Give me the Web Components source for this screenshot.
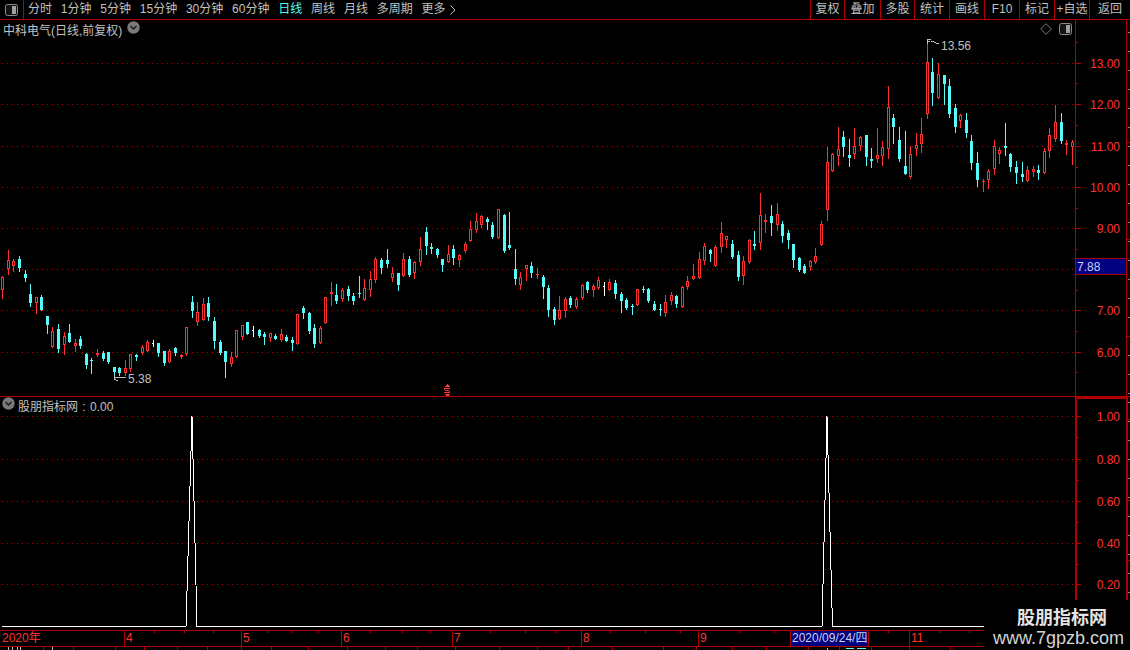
<!DOCTYPE html>
<html>
<head>
<meta charset="utf-8">
<style>
    html, body { margin: 0; padding: 0; background: #000; overflow: hidden; }
    body { width: 1130px; height: 650px; font: 12px "Liberation Sans", "Noto Sans CJK SC", sans-serif; color: #c0c0c0; }
</style>
</head>
<body>
<stock-terminal>
    <tool-bar slot="top">
        <tool-item>分时</tool-item>
        <tool-item>1分钟</tool-item>
        <tool-item>5分钟</tool-item>
        <tool-item>15分钟</tool-item>
        <tool-item>30分钟</tool-item>
        <tool-item>60分钟</tool-item>
        <tool-item active>日线</tool-item>
        <tool-item>周线</tool-item>
        <tool-item>月线</tool-item>
        <tool-item>多周期</tool-item>
        <tool-item more>更多</tool-item>
        <tool-button slot="right" style="width:33px">复权</tool-button>
        <tool-button slot="right" style="width:35px">叠加</tool-button>
        <tool-button slot="right" style="width:33px">多股</tool-button>
        <tool-button slot="right" style="width:34px">统计</tool-button>
        <tool-button slot="right" style="width:34px">画线</tool-button>
        <tool-button slot="right" style="width:34px">F10</tool-button>
        <tool-button slot="right" style="width:34px">标记</tool-button>
        <tool-button slot="right" style="width:34px">+自选</tool-button>
        <tool-button slot="right" style="width:40px">返回</tool-button>
    </tool-bar>
    <main-pane slot="main">
        <pane-title tools>中科电气(日线,前复权)</pane-title>
    </main-pane>
    <sub-pane slot="sub">
        <pane-title indent>股朋指标网 : 0.00</pane-title>
    </sub-pane>
    <time-axis slot="time">
        <time-cell width="124">2020年</time-cell>
        <time-cell width="117" ticks="29,59,88">4</time-cell>
        <time-cell width="100" ticks="25,50,76">5</time-cell>
        <time-cell width="111" ticks="28,60,88">6</time-cell>
        <time-cell width="129" ticks="37,72,103">7</time-cell>
        <time-cell width="117" ticks="28,63,98">8</time-cell>
        <time-cell width="92" ticks="41,75">9</time-cell>
        <time-cell width="78" selected>2020/09/24/四</time-cell>
        <time-cell width="41" ticks="19">&nbsp;</time-cell>
        <time-cell width="221" ticks="29,59">11</time-cell>
    </time-axis>
    <bottom-tabs slot="tabs"></bottom-tabs>
    <water-mark slot="mark">
        <span slot="name">股朋指标网</span>
        <span slot="site">www.7gpzb.com</span>
    </water-mark>
</stock-terminal>

<script>
// shared colours of the terminal
const LINE = '#b00000';
const RED = '#ff3232';
const CYAN = '#54fcfc';
const GRID = '#c00000';

function fragment(html) {
    return document.createRange().createContextualFragment(html);
}

// candles read off the chart: colour, x, high, body top, body bottom, low (3x coords in each block)
const CANDLES = [
    { ox: 0, oy: 240, rows: 'r 7 108 112 150 173,r 25 30 60 87 102,r 40 58 64 78 93,c 58 48 57 84 93,c 76 90 102 114 123,c 91 132 162 189 198,r 109 171 171 189 219,c 124 165 171 210 210,c 142 228 228 255 279,r 157 261 273 321 321,c 175 252 267 327 336,r 193 276 288 315 342,c 208 252 279 306 306,r 226 297 309 318 333,c 241 288 297 318 324,c 259 339 342 375 384,c 274 354 360 362 399,r 292 327 339 345 348,c 310 333 339 357 360,c 325 336 336 366 369,c 343 381 381 396 414,c 358 381 384 399 405,r 376 360 384 399 405,r 391 342 342 387 393,c 409 342 345 351 360,r 427 315 321 339 342,r 442 300 306 333 333,w 460 300 310 312 318,c 475 309 309 339 348,c 493 333 333 369 375,r 508 327 333 366 366,c 526 321 324 339 345,r 544 342 345 351 354,r 559 261 261 342 345,c 577 168 186 213 231,r 592 186 216 246 255,r 610 174 192 240 240,c 625 171 189 231 240,c 643 231 243 303 324,c 661 300 306 339 342,c 676 333 333 366 411,r 694 336 351 372 378,r 709 270 270 351 351,r 727 255 255 291 297,c 742 246 246 282 282,w 760 258 270 272 288,c 777 267 270 288 291' },
    { ox: 260, oy: 200, rows: 'c 13 396 402 411 432,r 31 399 399 414 423,c 46 402 408 417 417,r 64 387 402 420 423,c 79 405 411 423 423,c 97 411 420 429 450,r 112 342 342 432 432,c 130 318 324 339 354,c 148 336 339 393 399,c 163 372 384 432 441,r 181 378 384 429 429,r 196 291 291 369 369,r 214 246 276 282 315,c 229 252 285 303 309,r 247 264 270 297 303,c 265 258 267 288 300,c 280 279 288 303 312,c 298 228 279 282 291,r 313 237 264 300 300,r 331 213 237 270 288,r 346 171 177 240 246,c 364 174 180 204 219,c 382 147 180 192 201,r 397 201 219 234 243,c 415 219 219 255 270,r 430 159 177 228 228,c 448 168 177 225 228,r 463 183 186 219 234,r 481 111 147 186 195,c 499 81 96 138 162,c 514 129 141 147 159,c 532 144 147 165 171,c 547 177 177 195 213,r 565 135 162 186 186,c 580 135 147 174 192,r 598 162 165 180 198,r 616 126 132 153 156,r 631 63 87 123 123,r 649 39 63 90 96,r 664 45 48 75 81,c 682 51 57 66 87,c 697 66 75 111 114,r 715 27 27 114 114,c 733 42 45 153 156,c 748 36 135 144 147,c 766 147 207 237 252' },
    { ox: 510, oy: 200, rows: 'r 31 216 231 255 267,r 49 195 195 207 240,c 64 186 198 219 231,r 82 204 222 224 234,c 100 225 231 261 294,c 115 255 264 330 348,c 133 321 327 360 372,r 148 288 330 357 357,r 166 291 297 333 351,c 181 288 294 315 321,r 199 291 297 321 324,r 217 252 255 294 297,c 232 243 246 270 276,r 250 252 258 270 288,r 265 231 240 264 267,w 283 246 258 260 285,r 298 237 246 270 270,c 316 240 249 282 294,c 334 276 282 303 336,c 349 294 300 324 327,c 367 312 318 321 342,r 382 267 267 315 315,c 400 258 267 270 276,c 415 264 267 303 306,c 433 303 312 330 330,c 451 312 327 330 345,r 466 285 306 339 348,r 484 276 285 303 312,c 499 285 288 312 321,r 517 258 261 321 321,r 532 228 243 261 267,r 550 192 228 237 237,r 568 156 177 234 234,r 583 129 138 183 192,c 601 147 150 162 183,r 616 135 141 198 198,r 634 66 99 141 156,r 649 108 108 120 141,c 667 120 132 171 174,c 685 153 165 231 240,r 700 168 183 228 252,r 718 117 120 186 189,c 733 93 132 138 147,r 751 -21 45 129 147,r 766 42 60 66 96,c 784 15 48 69 105,r 802 9 42 75 90,c 817 63 72 108 126,c 835 90 99 120 144,c 850 132 132 180 201,c 868 171 174 210 213,c 883 192 198 219 219' },
    { ox: 800, oy: 40, rows: 'r 31 660 663 681 690,r 46 624 648 666 669,r 64 543 552 615 615,r 82 321 366 510 540,r 97 339 342 393 393,r 115 261 327 348 375,c 130 273 291 321 348,c 148 297 345 354 378,r 163 264 318 342 354,r 181 288 291 318 330,c 199 285 285 351 375,c 214 324 357 363 381,r 232 264 345 357 366,r 247 303 321 348 375,r 265 138 201 327 354,c 280 222 234 261 309,c 298 261 300 357 363,c 316 273 378 402 402,r 331 318 342 411 414,r 349 279 315 327 345,r 364 234 282 312 336,r 382 12 66 222 234,c 397 54 96 159 195,r 415 69 102 174 174,c 433 105 105 132 192,c 448 117 138 222 231,c 466 192 204 261 276,r 481 222 225 243 261,c 499 219 240 279 291,c 514 285 303 369 387,c 532 336 369 420 438,r 550 417 423 425 453,r 565 387 393 420 444,r 583 300 318 387 402,r 598 321 330 342 369,c 616 249 318 324 345,c 631 339 342 381 393,c 649 363 381 399 429,c 667 366 402 411 423,r 682 378 390 423 423,r 700 378 387 396 408,c 715 375 390 399 417,r 733 324 333 399 399,r 748 264 285 333 351,r 766 195 246 297 303,c 784 219 246 303 309,r 799 300 309 315 342,r 817 300 306 321 372' }
];

function candleSvg() {
    let out = '';
    const colours = { r: RED, c: CYAN, w: '#ffffff' };
    CANDLES.forEach(function(block) {
        block.rows.split(',').forEach(function(row) {
            const p = row.split(' ');
            const x = Math.floor(block.ox + p[1] / 3);
            const y = p.slice(2).map(function(v) { return Math.round(block.oy + v / 3); });
            const col = colours[p[0]];
            const h = y[2] - y[1];
            // wick: above and below the body only, red bodies are hollow
            out += `<rect x="${x}" y="${y[0]}" width="1" height="${Math.max(y[1] - y[0], 0)}" fill="${col}"/>`;
            out += `<rect x="${x}" y="${y[2]}" width="1" height="${Math.max(y[3] - y[2] + 1, 1)}" fill="${col}"/>`;
            if (p[0] === 'w') {
                out += `<rect x="${x - 1}" y="${y[1]}" width="2" height="1" fill="${col}"/>`;
                out += `<rect x="${x}" y="${y[0]}" width="1" height="${y[3] - y[0]}" fill="${col}"/>`;
            } else if (p[0] === 'c' || h < 3) {
                out += `<rect x="${x - 1}" y="${y[1]}" width="3" height="${Math.max(h, 1)}" fill="${col}"/>`;
            } else {
                out += `<rect x="${x - 0.5}" y="${y[1] + 0.5}" width="2" height="${h - 1}" fill="none" stroke="${col}"/>`;
            }
        });
    });
    return out;
}

function gridLines(levels, x1, x2) {
    return levels.map(function(y) {
        return `<line x1="${x1}" x2="${x2}" y1="${y + 0.5}" y2="${y + 0.5}" stroke="${GRID}" stroke-dasharray="1 4"/>`;
    }).join('');
}

function stripTicks(from, to, reds) {
    let out = '';
    for (let y = from; y < to; y += 19) {
        out += `<rect x="1128" y="${y}" width="2" height="1" fill="#8c8c8c"/>`;
    }
    reds.forEach(function(y) {
        out += `<rect x="1127" y="${y}" width="3" height="1" fill="${LINE}"/>`;
    });
    return out;
}

class StockTerminal extends HTMLElement {
    constructor() {
        super();
        const shadow = this.attachShadow({mode: 'open'});
        shadow.appendChild(fragment(`
            <style>
                :host {
                    display: flex;
                    flex-direction: column;
                    position: relative;
                    width: 1130px;
                    height: 650px;
                    background: #000;
                    overflow: hidden;
                }
            </style>
            <slot name="top"></slot>
            <slot name="main"></slot>
            <slot name="sub"></slot>
            <slot name="time"></slot>
            <slot name="tabs"></slot>
            <slot name="mark"></slot>
        `));
    }
}
window.customElements.define('stock-terminal', StockTerminal);

class ToolBar extends HTMLElement {
    constructor() {
        super();
        const shadow = this.attachShadow({mode: 'open'});
        shadow.appendChild(fragment(`
            <style>
                :host {
                    display: flex;
                    height: 19px;
                    border-bottom: 1px solid ${LINE};
                }
                .toggle {
                    width: 23px;
                    border-right: 1px solid ${LINE};
                    display: flex;
                    align-items: center;
                    justify-content: center;
                }
                .left {
                    display: flex;
                    align-items: center;
                    gap: 8.8px;
                    padding-left: 4px;
                }
                .right {
                    display: flex;
                    margin-left: auto;
                }
            </style>
            <div class="toggle">
                <svg width="13" height="12" viewBox="0 0 13 12">
                    <rect x="0.5" y="0.5" width="12" height="11" rx="2" fill="#141414" stroke="#8a8a8a"/>
                    <rect x="7" y="2" width="4" height="8" fill="#a0a0a0"/>
                </svg>
            </div>
            <div class="left"><slot></slot></div>
            <div class="right"><slot name="right"></slot></div>
        `));
    }
}
window.customElements.define('tool-bar', ToolBar);

class ToolItem extends HTMLElement {
    constructor() {
        super();
        const shadow = this.attachShadow({mode: 'open'});
        shadow.appendChild(fragment(`
            <style>
                :host { display: inline-flex; align-items: center; gap: 4px; line-height: 19px; white-space: nowrap; }
                :host([active]) { color: ${CYAN}; }
                svg { display: none; }
                :host([more]) svg { display: block; }
            </style>
            <slot></slot>
            <svg width="6" height="10" viewBox="0 0 6 10"><path d="M0.5 0.5 L5 5 L0.5 9.5" fill="none" stroke="#c0c0c0"/></svg>
        `));
    }
}
window.customElements.define('tool-item', ToolItem);

class ToolButton extends HTMLElement {
    constructor() {
        super();
        const shadow = this.attachShadow({mode: 'open'});
        shadow.appendChild(fragment(`
            <style>
                :host {
                    display: block;
                    border-left: 1px solid ${LINE};
                    text-align: center;
                    line-height: 19px;
                    white-space: nowrap;
                }
            </style>
            <slot></slot>
        `));
    }
}
window.customElements.define('tool-button', ToolButton);

class PaneTitle extends HTMLElement {
    constructor() {
        super();
        const shadow = this.attachShadow({mode: 'open'});
        const chevron = `
            <svg class="chevron" width="13" height="13" viewBox="0 0 13 13">
                <circle cx="6.5" cy="6.5" r="6.2" fill="#7a7a7a"/>
                <path d="M3.5 5 L6.5 8 L9.5 5" fill="none" stroke="#1a1a1a" stroke-width="1.4"/>
            </svg>`;
        shadow.appendChild(fragment(`
            <style>
                :host {
                    display: flex;
                    align-items: center;
                    height: 100%;
                    padding-left: 3px;
                    gap: 5px;
                    white-space: nowrap;
                }
                :host([indent]) { padding-left: 2px; gap: 3px; word-spacing: 1px; }
                .first { display: none; }
                :host([indent]) .first { display: block; }
                :host([indent]) .last { display: none; }
                .tools { display: none; margin-left: auto; margin-right: 3px; align-items: center; gap: 7px; }
                :host([tools]) .tools { display: flex; }
            </style>
            <span class="first">${chevron}</span>
            <slot></slot>
            <span class="last">${chevron}</span>
            <div class="tools">
                <svg width="12" height="12" viewBox="0 0 12 12"><path d="M6 0.7 L11.3 6 L6 11.3 L0.7 6 Z" fill="none" stroke="#7a7a7a"/></svg>
                <svg width="13" height="12" viewBox="0 0 13 12">
                    <rect x="0.5" y="0.5" width="12" height="11" rx="2" fill="#141414" stroke="#8a8a8a"/>
                    <rect x="7" y="2" width="4" height="8" fill="#a0a0a0"/>
                </svg>
            </div>
        `));
    }
}
window.customElements.define('pane-title', PaneTitle);

class MainPane extends HTMLElement {
    constructor() {
        super();
        const shadow = this.attachShadow({mode: 'open'});
        shadow.appendChild(fragment(`
            <style>
                :host {
                    display: flex;
                    height: 376px;
                    border-bottom: 1px solid ${LINE};
                }
                .chart { width: 1075px; display: flex; flex-direction: column; }
                .head { height: 18px; }
            </style>
            <div class="chart">
                <div class="head"><slot></slot></div>
                <candle-chart></candle-chart>
            </div>
            <price-axis></price-axis>
        `));
    }
}
window.customElements.define('main-pane', MainPane);

class CandleChart extends HTMLElement {
    constructor() {
        super();
        const shadow = this.attachShadow({mode: 'open'});
        const levels = [63, 104, 146, 187, 228, 269, 310, 352];
        shadow.appendChild(fragment(`
            <style>
                :host { display: block; height: 358px; }
                svg { display: block; shape-rendering: crispEdges; }
                text { fill: #c0c0c0; font-size: 12px; font-family: "Liberation Sans", sans-serif; }
            </style>
            <svg width="1075" height="358" viewBox="0 38 1075 358">
                ${gridLines(levels, 2, 1075)}
                ${candleSvg()}
                <path d="M927.5 39 V44 M927 39.5 H931 M927 41.5 H930 M931 41.5 H934 M934 42.5 H936 M936 43.5 H939" stroke="#c0c0c0" fill="none"/>
                <text x="941" y="50">13.56</text>
                <path d="M114.5 375 V380 M114 377.5 H126 M115 379.5 H116 M116 380.5 H118" stroke="#c0c0c0" fill="none"/>
                <text x="128" y="383">5.38</text>
                <path d="M447.5 384 V386 M446 385.5 H449 M445 386.5 H450 M444 388.5 H450 M444 389.5 H445 M445 390.5 H449 M449 391.5 H450 M444 392.5 H450 M445 394.5 H450 M446 395.5 H449" stroke="${RED}" fill="none"/>
            </svg>
        `));
    }
}
window.customElements.define('candle-chart', CandleChart);

class PriceAxis extends HTMLElement {
    constructor() {
        super();
        const shadow = this.attachShadow({mode: 'open'});
        const major = [[63, '13.00'], [104, '12.00'], [146, '11.00'], [187, '10.00'], [228, '9.00'], [310, '7.00'], [352, '6.00']];
        const minor = [42, 83, 125, 167, 208, 249, 290, 331, 372];
        const ticks = major.map(function(m) {
            return `<rect x="1076" y="${m[0]}" width="5" height="1" fill="${LINE}"/>
                    <text x="1120" y="${m[0] + 5}">${m[1]}</text>`;
        }).join('') + minor.map(function(y) {
            return `<rect x="1076" y="${y}" width="2" height="1" fill="${LINE}"/>`;
        }).join('');
        shadow.appendChild(fragment(`
            <style>
                :host { display: block; width: 55px; height: 376px; }
                svg { display: block; shape-rendering: crispEdges; }
                text { fill: ${RED}; font-size: 12px; text-anchor: end; font-family: "Liberation Sans", sans-serif; }
                .now { fill: #c8d0ff; text-anchor: start; }
            </style>
            <svg width="55" height="376" viewBox="1075 20 55 376">
                <rect x="1075" y="20" width="1" height="376" fill="${LINE}"/>
                <rect x="1126" y="20" width="1" height="376" fill="${LINE}"/>
                ${ticks}
                ${stripTicks(32, 396, [142, 239, 336])}
                <rect x="1075.5" y="258.5" width="51" height="16" fill="#000080" stroke="${LINE}"/>
                <text class="now" x="1077" y="271">7.88</text>
            </svg>
        `));
    }
}
window.customElements.define('price-axis', PriceAxis);

class SubPane extends HTMLElement {
    constructor() {
        super();
        const shadow = this.attachShadow({mode: 'open'});
        shadow.appendChild(fragment(`
            <style>
                :host { display: flex; height: 233px; }
                .chart { width: 1075px; display: flex; flex-direction: column; }
                .head { height: 16px; }
            </style>
            <div class="chart">
                <div class="head"><slot></slot></div>
                <indicator-chart></indicator-chart>
            </div>
            <indicator-axis></indicator-axis>
        `));
    }
}
window.customElements.define('sub-pane', SubPane);

class IndicatorChart extends HTMLElement {
    constructor() {
        super();
        const shadow = this.attachShadow({mode: 'open'});
        shadow.appendChild(fragment(`
            <style>
                :host { display: block; height: 217px; }
                svg { display: block; shape-rendering: crispEdges; }
            </style>
            <svg width="1075" height="217" viewBox="0 413 1075 217">
                ${gridLines([416, 459, 501, 543, 584], 2, 1075)}
                <polyline points="2,626.5 186,626.5 192,416 197,626.5 822,626.5 827,416 832.5,626.5 1075,626.5" fill="none" stroke="#fff"/>
            </svg>
        `));
    }
}
window.customElements.define('indicator-chart', IndicatorChart);

class IndicatorAxis extends HTMLElement {
    constructor() {
        super();
        const shadow = this.attachShadow({mode: 'open'});
        const major = [[416, '1.00'], [459, '0.80'], [501, '0.60'], [543, '0.40'], [584, '0.20']];
        const ticks = major.map(function(m) {
            return `<rect x="1077" y="${m[0]}" width="4" height="1" fill="${LINE}"/>
                    <text x="1120" y="${m[0] + 5}">${m[1]}</text>
                    <rect x="1077" y="${m[0] + 21}" width="2" height="1" fill="${LINE}"/>`;
        }).join('');
        shadow.appendChild(fragment(`
            <style>
                :host { display: block; width: 55px; height: 233px; }
                svg { display: block; shape-rendering: crispEdges; }
                text { fill: ${RED}; font-size: 12px; text-anchor: end; font-family: "Liberation Sans", sans-serif; }
            </style>
            <svg width="55" height="233" viewBox="1075 397 55 233">
                <rect x="1075" y="397" width="52" height="2" fill="${LINE}"/>
                <rect x="1075" y="397" width="2" height="233" fill="${LINE}"/>
                <rect x="1126" y="397" width="2" height="233" fill="${LINE}"/>
                ${ticks}
                ${stripTicks(402, 630, [419, 500, 560])}
            </svg>
        `));
    }
}
window.customElements.define('indicator-axis', IndicatorAxis);

class TimeAxis extends HTMLElement {
    constructor() {
        super();
        const shadow = this.attachShadow({mode: 'open'});
        shadow.appendChild(fragment(`
            <style>
                :host {
                    display: flex;
                    height: 15px;
                    border-top: 1px solid ${LINE};
                    border-bottom: 1px solid ${LINE};
                    color: ${RED};
                }
            </style>
            <slot></slot>
        `));
    }
}
window.customElements.define('time-axis', TimeAxis);

class TimeCell extends HTMLElement {
    constructor() {
        super();
        const shadow = this.attachShadow({mode: 'open'});
        shadow.appendChild(fragment(`
            <style>
                :host {
                    display: block;
                    box-sizing: border-box;
                    flex: none;
                    line-height: 15px;
                    padding-left: 2px;
                    border-right: 1px solid transparent;
                    white-space: nowrap;
                    background-repeat: no-repeat;
                }
                :host([selected]) { background-color: #000080; color: #c8d0e8; }
            </style>
            <slot></slot>
        `));
    }
    connectedCallback() {
        this.style.width = this.getAttribute('width') + 'px';
        const first = this.previousElementSibling;
        if (first) {
            this.style.borderLeft = '1px solid ' + LINE;
            this.style.paddingLeft = '1px';
        }
        const ticks = (this.getAttribute('ticks') || '').split(',').filter(Boolean);
        if (ticks.length) {
            this.style.backgroundImage = ticks.map(function() {
                return `linear-gradient(${LINE}, ${LINE})`;
            }).join(',');
            this.style.backgroundSize = ticks.map(function() { return '1px 2px'; }).join(',');
            this.style.backgroundPosition = ticks.map(function(t) { return t + 'px 0'; }).join(',');
        }
    }
}
window.customElements.define('time-cell', TimeCell);

class BottomTabs extends HTMLElement {
    constructor() {
        super();
        const shadow = this.attachShadow({mode: 'open'});
        const stops = [43, 73, 115, 144, 177, 207, 241, 271, 308, 347, 385, 417, 455, 499, 537, 568, 612, 663, 696, 732, 766, 808, 839, 871, 909, 950];
        const bars = stops.map(function(x) {
            return `<rect x="${x}" y="0" width="1" height="3" fill="${LINE}"/>`;
        }).join('');
        shadow.appendChild(fragment(`
            <style>
                :host { display: block; height: 3px; overflow: hidden; }
                svg { display: block; shape-rendering: crispEdges; }
            </style>
            <svg width="1130" height="3" viewBox="0 0 1130 3">
                ${bars}
                <path d="M8 0 v3 M12 0 v3 M17 0 v3 M20 0 v3 M52 0 v3 M827 1 v2" stroke="#c0c0c0" fill="none"/>
                <path d="M846 1.5 h8 M857 1.5 h9" stroke="${CYAN}" fill="none"/>
            </svg>
        `));
    }
}
window.customElements.define('bottom-tabs', BottomTabs);

class WaterMark extends HTMLElement {
    constructor() {
        super();
        const shadow = this.attachShadow({mode: 'open'});
        shadow.appendChild(fragment(`
            <style>
                :host {
                    position: absolute;
                    right: 0;
                    bottom: 0;
                    width: 146px;
                    height: 50px;
                    background: #000;
                    color: #e4e4e4;
                    display: flex;
                    flex-direction: column;
                    align-items: center;
                    white-space: nowrap;
                }
                .name { font: bold 18px/24px "Noto Sans CJK SC", sans-serif; margin-top: 4px; padding-left: 10px; }
                .site { font: 18px/20px "Liberation Sans", sans-serif; color: #d4d4d4; padding-left: 3px; }
            </style>
            <div class="name"><slot name="name"></slot></div>
            <div class="site"><slot name="site"></slot></div>
        `));
    }
}
window.customElements.define('water-mark', WaterMark);
</script>
</body>
</html>
